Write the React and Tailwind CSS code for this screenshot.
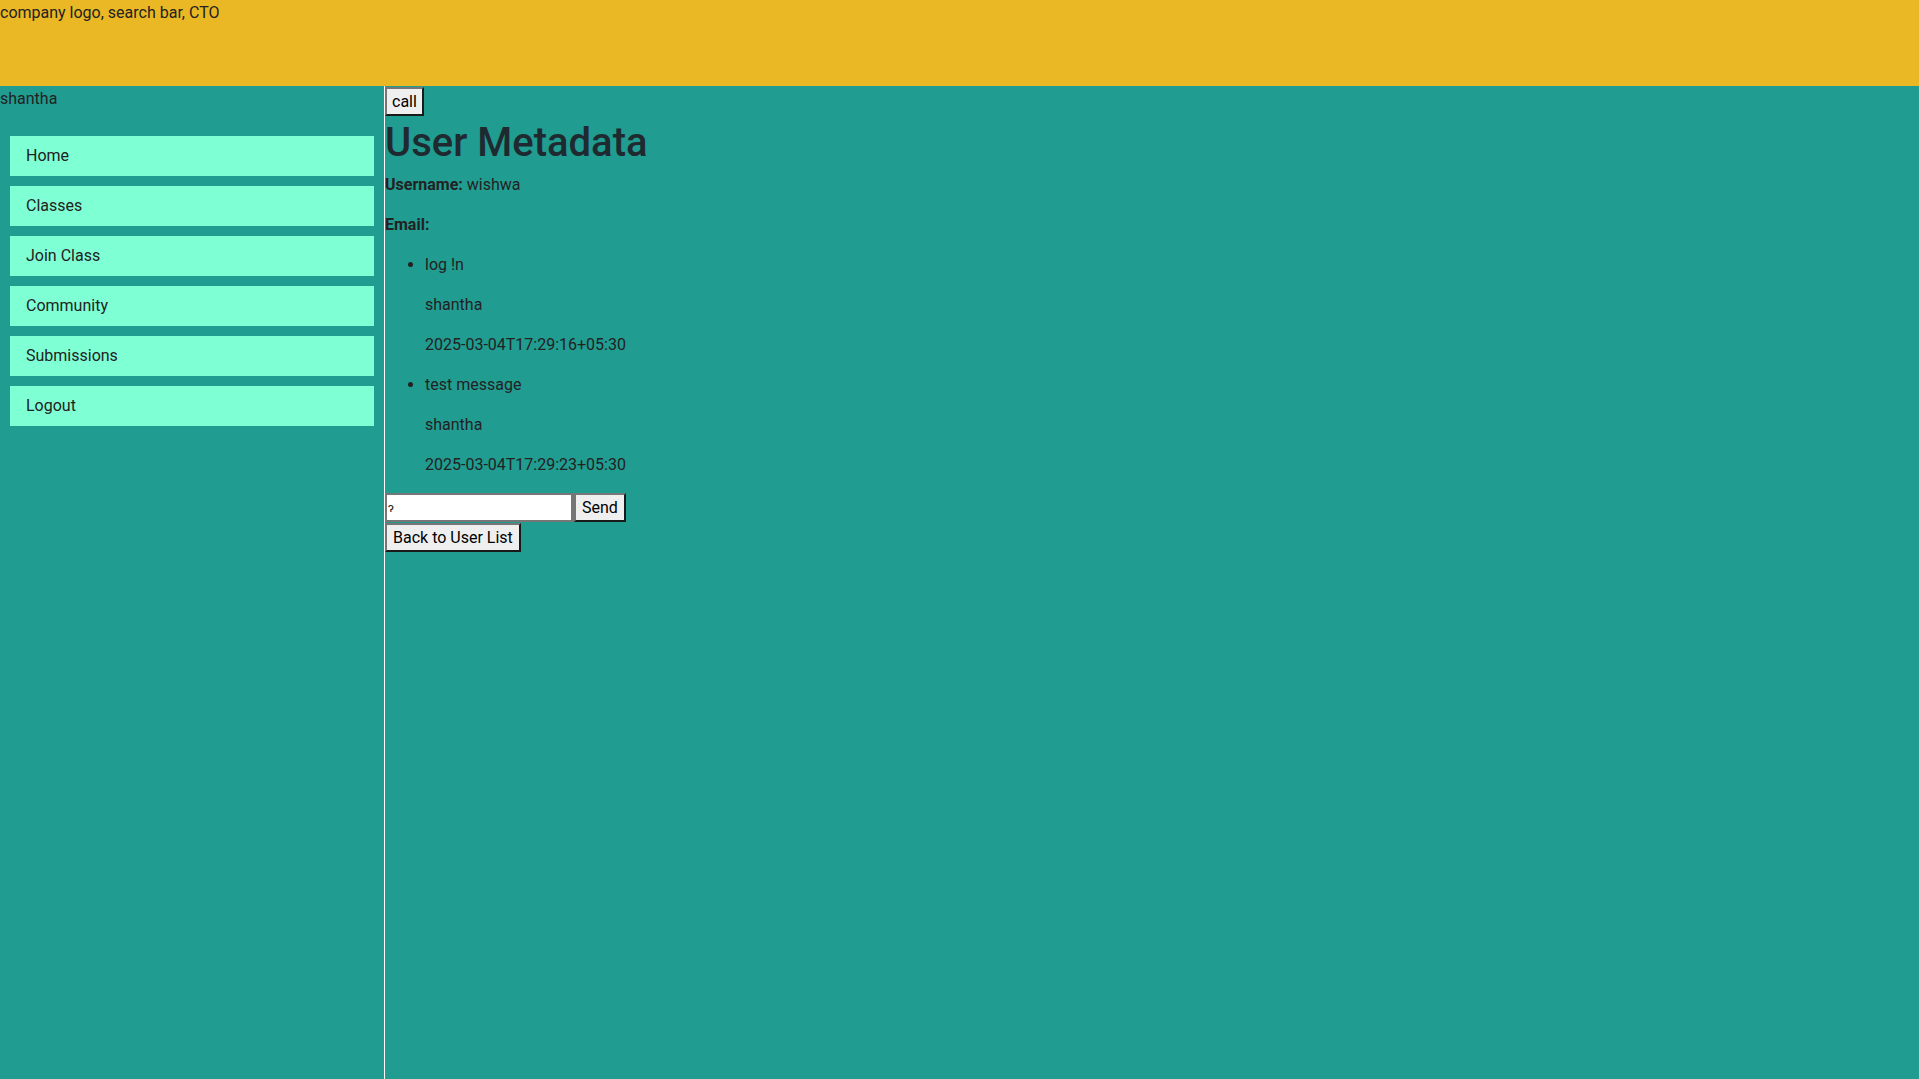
import React, { useState } from 'react';

const navItems = ['Home', 'Classes', 'Join Class', 'Community', 'Submissions', 'Logout'];

const messages = [
  { text: 'log !n', sender: 'shantha', time: '2025-03-04T17:29:16+05:30' },
  { text: 'test message', sender: 'shantha', time: '2025-03-04T17:29:23+05:30' },
];

const btn =
  'bg-[#efefef] text-black border-2 border-solid border-t-[#767676] border-l-[#767676] border-r-[#1a1a1a] border-b-[#1a1a1a] h-[29px] px-[5px] text-[16px] leading-none flex items-center';

const App = () => {
  const [draft, setDraft] = useState('ɂ');

  return (
    <div className="min-h-screen text-[#222] text-[16px] leading-6" style={{ fontFamily: '"Segoe UI", Roboto, sans-serif' }}>
      {/* Header */}
      <header className="h-[86px] bg-[#eab824]">
        <div className="pt-[1px]">company logo, search bar, CTO</div>
      </header>

      <div className="flex h-screen bg-[#209c91]">
        {/* Sidebar */}
        <aside className="w-[385px] shrink-0 border-r border-white">
          <div className="pt-[1px]">shantha</div>
          <nav className="mt-[25px] px-[10px] flex flex-col gap-[10px]">
            {navItems.map((item) => (
              <div key={item} className="h-[40px] bg-[#7fffd4] pl-[16px] flex items-center">
                {item}
              </div>
            ))}
          </nav>
        </aside>

        {/* Main */}
        <main className="flex-1 pt-[1px]">
          <button className={btn}>call</button>
          <h1 className="text-[40px] font-medium leading-[54px] text-[#1f2a30]">User Metadata</h1>
          <p className="mt-[3px]">
            <strong>Username:</strong> wishwa
          </p>
          <p className="mt-[16px]">
            <strong>Email:</strong>
          </p>
          <ul className="list-disc pl-[40px]">
            {messages.map((m, i) => (
              <li key={i} className="mt-[16px]">
                <p>{m.text}</p>
                <p className="mt-[16px]">{m.sender}</p>
                <p className="mt-[16px]">{m.time}</p>
              </li>
            ))}
          </ul>
          <div className="flex mt-[16px]">
            <input
              value={draft}
              onChange={(e) => setDraft(e.target.value)}
              className="w-[188px] h-[29px] bg-white border-2 border-[#767676] px-[1px] text-[13px] outline-none"
            />
            <button className={`${btn} ml-[1px] px-[6px]`}>Send</button>
          </div>
          <button className={`${btn} mt-[1px] px-[6px]`}>Back to User List</button>
        </main>
      </div>
    </div>
  );
};

export default App;
